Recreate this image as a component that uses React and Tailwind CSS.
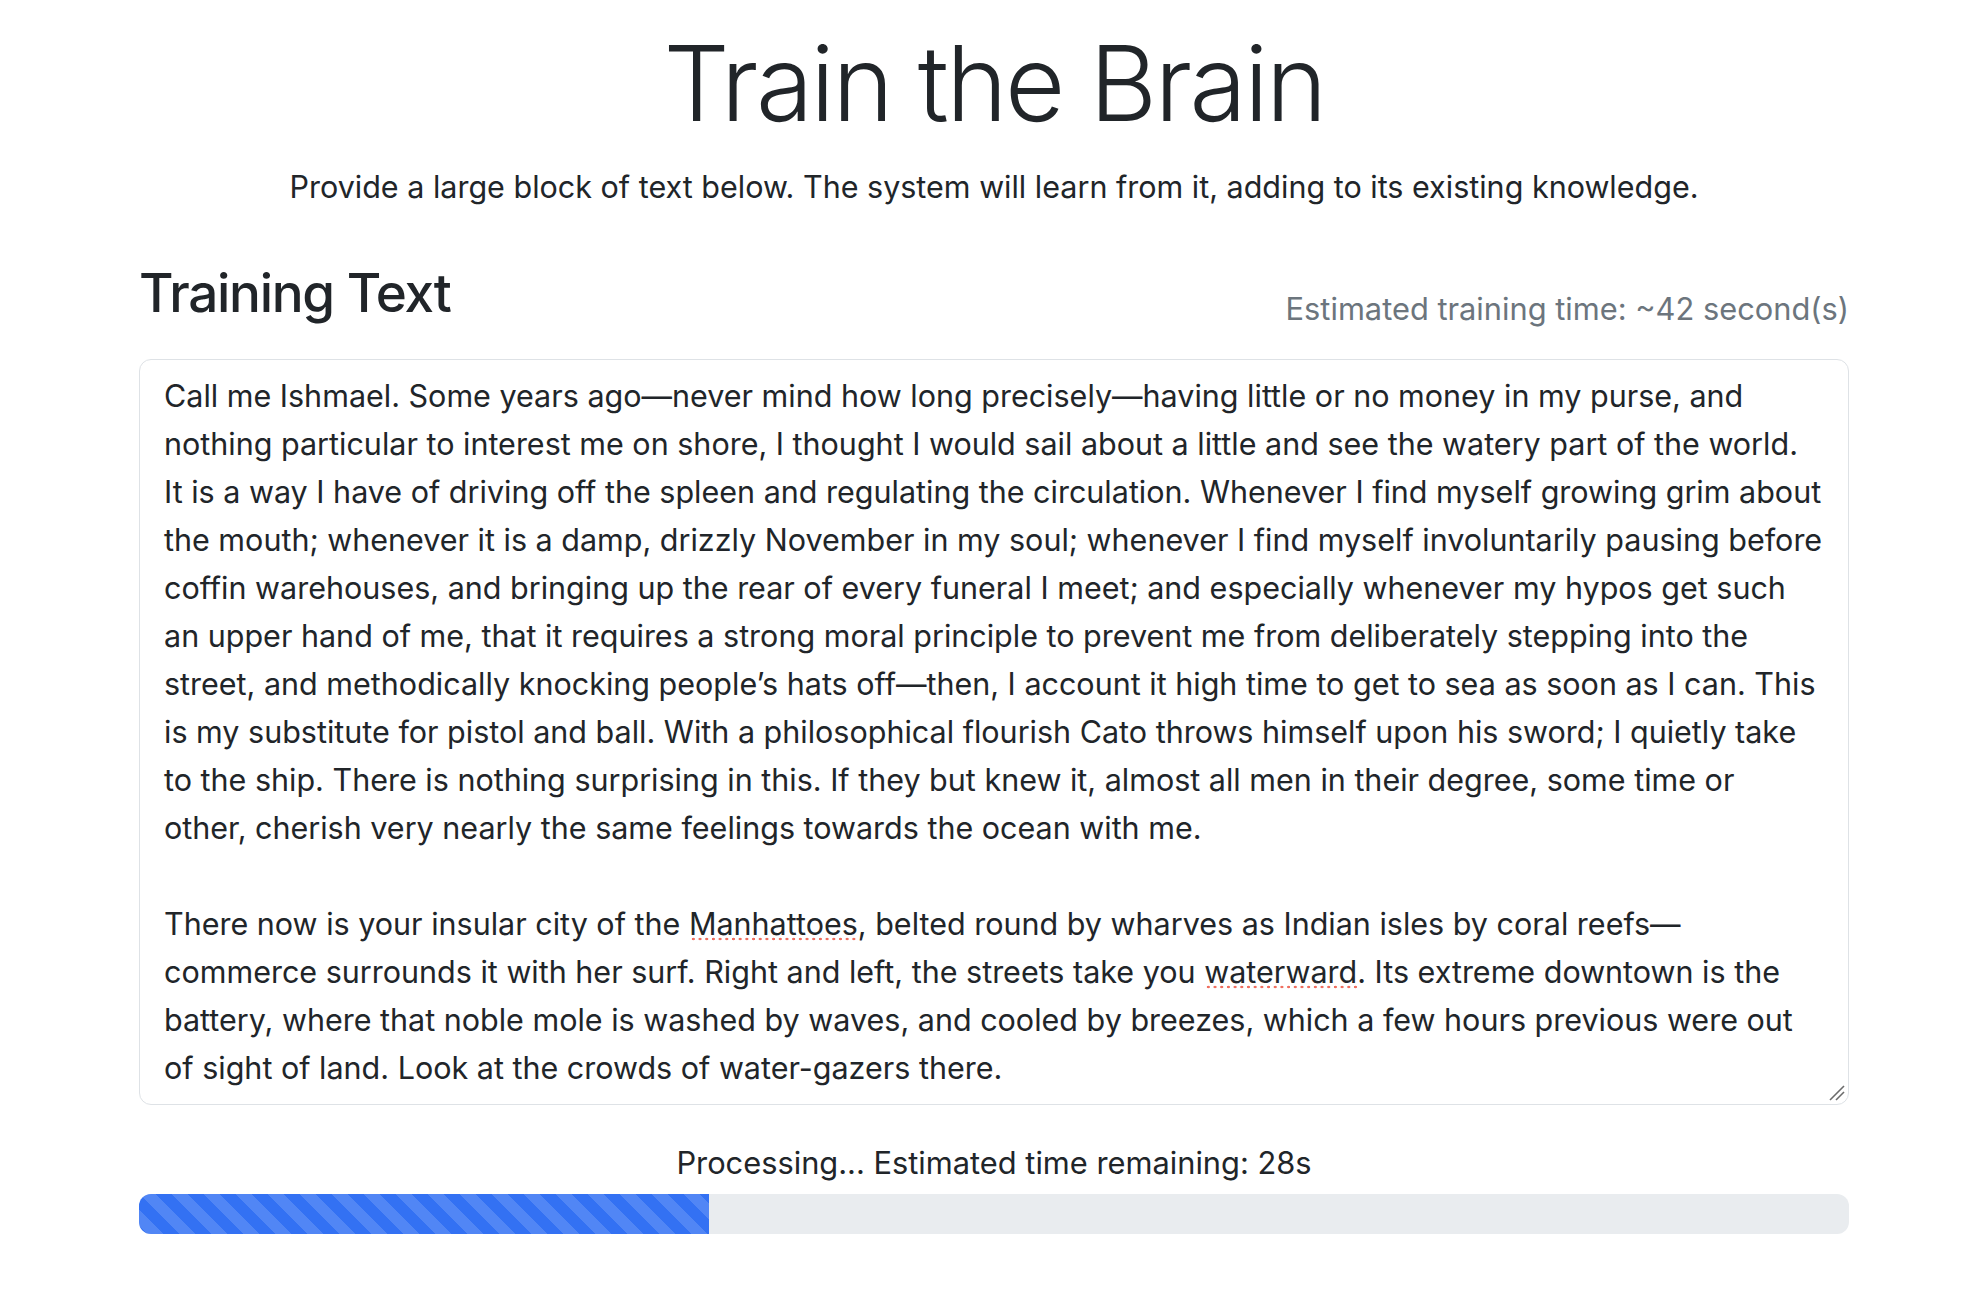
import React from "react";

const lines = [
  "Call me Ishmael. Some years ago—never mind how long precisely—having little or no money in my purse, and",
  "nothing particular to interest me on shore, I thought I would sail about a little and see the watery part of the world.",
  "It is a way I have of driving off the spleen and regulating the circulation. Whenever I find myself growing grim about",
  "the mouth; whenever it is a damp, drizzly November in my soul; whenever I find myself involuntarily pausing before",
  "coffin warehouses, and bringing up the rear of every funeral I meet; and especially whenever my hypos get such",
  "an upper hand of me, that it requires a strong moral principle to prevent me from deliberately stepping into the",
  "street, and methodically knocking people’s hats off—then, I account it high time to get to sea as soon as I can. This",
  "is my substitute for pistol and ball. With a philosophical flourish Cato throws himself upon his sword; I quietly take",
  "to the ship. There is nothing surprising in this. If they but knew it, almost all men in their degree, some time or",
  "other, cherish very nearly the same feelings towards the ocean with me.",
];

const Misspelled = ({ children }) => (
  <span className="bg-[radial-gradient(circle,#ef6f60_1.1px,transparent_1.6px)] bg-[length:6.7px_4px] bg-[position:1px_calc(100%-1px)] bg-repeat-x">
    {children}
  </span>
);

export default function App() {
  return (
    <div
      className="min-h-[1296px] w-[1980px] bg-white text-[#212529]"
      style={{ fontFamily: "Inter, 'Noto Sans', sans-serif" }}
    >
      <div className="ml-[139px] w-[1710px] pt-[21px]">
        <h1 className="text-center text-[104px] font-light leading-[1.2] tracking-[-2.5px]">
          Train the Brain
        </h1>
        <p className="mt-[18px] text-center text-[30.5px] leading-[45px]">
          Provide a large block of text below. The system will learn from it, adding to its existing knowledge.
        </p>

        <div className="mt-[53px] flex items-start justify-between">
          <h3 className="text-[53px] font-medium leading-[1.2] tracking-[-1.3px]">Training Text</h3>
          <span className="mt-[26px] text-[30.8px] leading-[42px] text-[#6c757d]">
            Estimated training time: ~42 second(s)
          </span>
        </div>

        <div className="relative mt-[29px] rounded-[12px] border border-[#dee2e6] bg-white px-[24px] py-[12px] text-[30.5px] leading-[48px]">
          {lines.map((l, i) => (
            <div key={i} className="whitespace-nowrap">
              {l}
            </div>
          ))}
          <div className="h-[48px]" />
          <div className="whitespace-nowrap">
            There now is your insular city of the <Misspelled>Manhattoes</Misspelled>, belted round by wharves as Indian isles by coral reefs—
          </div>
          <div className="whitespace-nowrap">
            commerce surrounds it with her surf. Right and left, the streets take you <Misspelled>waterward</Misspelled>. Its extreme downtown is the
          </div>
          <div className="whitespace-nowrap">
            battery, where that noble mole is washed by waves, and cooled by breezes, which a few hours previous were out
          </div>
          <div className="whitespace-nowrap">of sight of land. Look at the crowds of water-gazers there.</div>

          <svg
            className="absolute bottom-[2px] right-[2px]"
            width="18"
            height="18"
            viewBox="0 0 18 18"
          >
            <line x1="2" y1="16" x2="16" y2="2" stroke="#6b6b6b" strokeWidth="1.6" />
            <line x1="8" y1="16" x2="16" y2="8" stroke="#6b6b6b" strokeWidth="1.6" />
          </svg>
        </div>

        <p className="mt-[35px] text-center text-[30.8px] leading-[45px]">
          Processing... Estimated time remaining: 28s
        </p>
        <div className="mt-[9px] flex h-[40px] overflow-hidden rounded-[12px] bg-[#e9ecef]">
          <div
            className="h-full bg-[#3371f3] bg-[linear-gradient(45deg,rgba(255,255,255,.15)_25%,transparent_25%,transparent_50%,rgba(255,255,255,.15)_50%,rgba(255,255,255,.15)_75%,transparent_75%,transparent)] bg-[length:32px_32px]"
            style={{ width: `${(14 / 42) * 100}%` }}
          />
        </div>
      </div>
    </div>
  );
}
